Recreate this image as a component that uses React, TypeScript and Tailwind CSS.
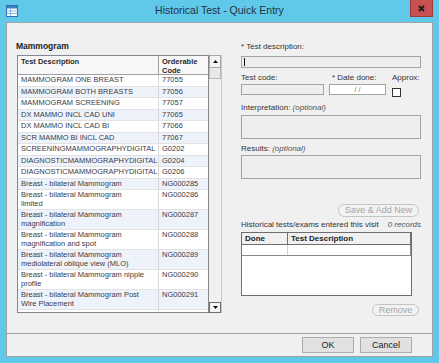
const rows: [string, string][] = [
  ["MAMMOGRAM ONE BREAST", "77055"],
  ["MAMMOGRAM BOTH BREASTS", "77056"],
  ["MAMMOGRAM SCREENING", "77057"],
  ["DX MAMMO INCL CAD UNI", "77065"],
  ["DX MAMMO INCL CAD BI", "77066"],
  ["SCR MAMMO BI INCL CAD", "77067"],
  ["SCREENINGMAMMOGRAPHYDIGITAL", "G0202"],
  ["DIAGNOSTICMAMMOGRAPHYDIGITAL", "G0204"],
  ["DIAGNOSTICMAMMOGRAPHYDIGITAL", "G0206"],
  ["Breast - bilateral Mammogram", "NG000285"],
  ["Breast - bilateral Mammogram\nlimited", "NG000286"],
  ["Breast - bilateral Mammogram\nmagnification", "NG000287"],
  ["Breast - bilateral Mammogram\nmagnification and spot", "NG000288"],
  ["Breast - bilateral Mammogram\nmediolateral oblique view (MLO)", "NG000289"],
  ["Breast - bilateral Mammogram nipple\nprofile", "NG000290"],
  ["Breast - bilateral Mammogram Post\nWire Placement", "NG000291"],
];

function WindowIcon() {
  return (
    <svg width="12" height="12" viewBox="0 0 12 12">
      <rect x="0.5" y="0.5" width="11" height="11" fill="#ffffff" stroke="#2f6fb3" />
      <rect x="1" y="1" width="10" height="2.5" fill="#3b82c9" />
      <path d="M1 6h10M1 8.5h10M4.5 3.5v8" stroke="#6aa0d6" strokeWidth="0.8" />
    </svg>
  );
}

function Arrow({ up }: { up?: boolean }) {
  return (
    <svg width="5" height="3" viewBox="0 0 5 3">
      <path d={up ? "M0 3L2.5 0L5 3Z" : "M0 0L5 0L2.5 3Z"} fill="#111" />
    </svg>
  );
}

function Label({ children }: { children: React.ReactNode }) {
  return <div className="h-[10px] text-[8px] leading-[10px] text-[#333] whitespace-nowrap">{children}</div>;
}

export default function App() {
  return (
    <div className="w-[439px] h-[363px] bg-[#60c8e9] flex flex-col font-['Liberation_Sans',Arial,sans-serif] overflow-hidden">
      {/* title bar */}
      <div className="h-[22px] grid grid-cols-[1fr_auto_1fr] items-start">
        <div className="pl-[6px] pt-[5px]">
          <WindowIcon />
        </div>
        <div className="pt-[4px] text-[10.5px] leading-[13px] text-[#1f3344]">Historical Test - Quick Entry</div>
        <div className="flex justify-end pr-[6px]">
          <div className="w-[23px] h-[17px] bg-[#c75050] border border-[#9c3a3a] border-t-0 flex items-center justify-center">
            <svg width="7" height="7" viewBox="0 0 7 7">
              <path d="M1 1L6 6M6 1L1 6" stroke="#1a1a1a" strokeWidth="1.8" />
            </svg>
          </div>
        </div>
      </div>

      {/* client area */}
      <div className="ml-[6px] w-[427px] h-[335px] border border-[#9aa3ab] bg-[#f0f0f0] flex flex-col">
        <div className="flex-1 flex">
          {/* left column */}
          <div className="ml-[9px] w-[206px] pt-[18px]">
            <div className="h-[10px] text-[8.5px] leading-[10px] font-bold text-[#222]">Mammogram</div>
            <div className="mt-[4px] ml-[1px] flex h-[258px]">
              <div className="w-[192px] border border-[#828790] bg-white overflow-hidden text-[7.5px] text-[#3a3d48]">
                <div className="flex h-[19px] bg-[#f7f7f7] border-b border-[#a0a0a0] font-bold text-[#2a2a2a] leading-[8.5px]">
                  <div className="w-[141px] border-r border-[#a0a0a0] pl-[3px] pt-[2px]">Test Description</div>
                  <div className="flex-1 pl-[3px] pt-[2px]">
                    Orderable
                    <br />
                    Code
                  </div>
                </div>
                {rows.map(([desc, code], i) => (
                  <div
                    key={i}
                    className={`flex leading-[8.5px] border-b border-[#e2e2e2] ${i % 2 === 1 ? "bg-[#eef3fb]" : "bg-white"}`}
                  >
                    <div className="w-[141px] border-r border-[#d8d8d8] pl-[3px] pt-[1px] pb-[1px] whitespace-pre-line">{desc}</div>
                    <div className="flex-1 pl-[3px] pt-[1px] pb-[1px]">{code}</div>
                  </div>
                ))}
                <div className="flex h-[4px]">
                  <div className="w-[141px] border-r border-[#d8d8d8]" />
                </div>
              </div>
              <div className="w-[13px] flex flex-col bg-[#f0f0f0] border-r border-[#c8c8c8]">
                <div className="h-[13px] border border-[#a8a8a8] bg-[#f4f4f4] flex items-center justify-center">
                  <Arrow up />
                </div>
                <div className="h-[11px] border border-t-0 border-[#b8b8b8] bg-[#e8e8e8]" />
                <div className="flex-1" />
                <div className="h-[11px] border border-[#6f6f6f] bg-[#f4f4f4] flex items-center justify-center">
                  <Arrow />
                </div>
              </div>
            </div>
          </div>

          {/* right column */}
          <div className="ml-[19px] w-[180px] pt-[19px] flex flex-col">
            <Label>* Test description:</Label>
            <div className="mt-[4px] h-[12px] border border-[#a3a3a3] bg-[#eeeeee] flex items-center pl-[2px]">
              <div className="w-px h-[8px] bg-[#111]" />
            </div>

            <div className="mt-[5px] flex">
              <div className="w-[83px]">
                <Label>Test code:</Label>
                <div className="mt-[1px] h-[11px] border border-[#a3a3a3] bg-[#eeeeee]" />
              </div>
              <div className="ml-[5px] w-[57px]">
                <Label>
                  <span className="pl-[3px]">* Date done:</span>
                </Label>
                <div className="mt-[1px] h-[11px] border border-[#a3a3a3] bg-white text-[7px] leading-[9px] text-[#666] text-center">
                  / /
                </div>
              </div>
              <div className="ml-[6px]">
                <Label>Approx:</Label>
                <div className="mt-[5px] w-[9px] h-[9px] border border-[#333] bg-white" />
              </div>
            </div>

            <div className="mt-[6px]">
              <Label>
                Interpretation: <i className="text-[#555]">(optional)</i>
              </Label>
            </div>
            <div className="mt-[2px] h-[24px] border border-[#a3a3a3] bg-[#eeeeee]" />

            <div className="mt-[5px]">
              <Label>
                Results: <i className="text-[#555]">(optional)</i>
              </Label>
            </div>
            <div className="mt-[1px] h-[24px] border border-[#a3a3a3] bg-[#eeeeee]" />

            <div className="mt-[25px] mr-[2px] self-end w-[81px] h-[13px] rounded-full border border-[#c4c4c4] bg-[#f2f2f2] text-[9px] leading-[11px] text-[#a5a5a5] text-center">
              Save &amp; Add New
            </div>

            <div className="mt-[3px] flex justify-between h-[10px] text-[8px] leading-[10px] text-[#333] whitespace-nowrap">
              <span>Historical tests/exams entered this visit</span>
              <i className="text-[#555]">0 records</i>
            </div>

            <div className="mt-[2px] w-[171px] h-[64px] border border-[#6e6e6e] bg-white flex flex-col">
              <div className="flex h-[12px] bg-[#f0f0f0] border-b border-[#6e6e6e] text-[8px] leading-[11px] font-bold text-[#222]">
                <div className="w-[46px] border-r border-[#6e6e6e] pl-[3px]">Done</div>
                <div className="flex-1 pl-[3px] border-r border-[#6e6e6e]">Test Description</div>
              </div>
              <div className="flex h-[11px] border-b border-[#8a8a8a]">
                <div className="w-[46px] border-r border-[#d0d0d0]" />
                <div className="flex-1 border-r border-[#8a8a8a]" />
              </div>
            </div>

            <div className="mt-[8px] mr-[2px] self-end w-[47px] h-[12px] rounded-full border border-[#c4c4c4] bg-[#f2f2f2] text-[9px] leading-[10px] text-[#a5a5a5] text-center">
              Remove
            </div>
          </div>
        </div>

        {/* bottom bar */}
        <div className="h-[23px] border-t border-[#a0a0a0] flex items-center justify-end gap-[6px] pr-[20px]">
          <div className="w-[52px] h-[16px] border border-[#adadad] bg-[#e1e1e1] text-[9px] leading-[14px] text-[#222] text-center">
            OK
          </div>
          <div className="w-[52px] h-[16px] border border-[#adadad] bg-[#e1e1e1] text-[9px] leading-[14px] text-[#222] text-center">
            Cancel
          </div>
        </div>
      </div>
    </div>
  );
}
